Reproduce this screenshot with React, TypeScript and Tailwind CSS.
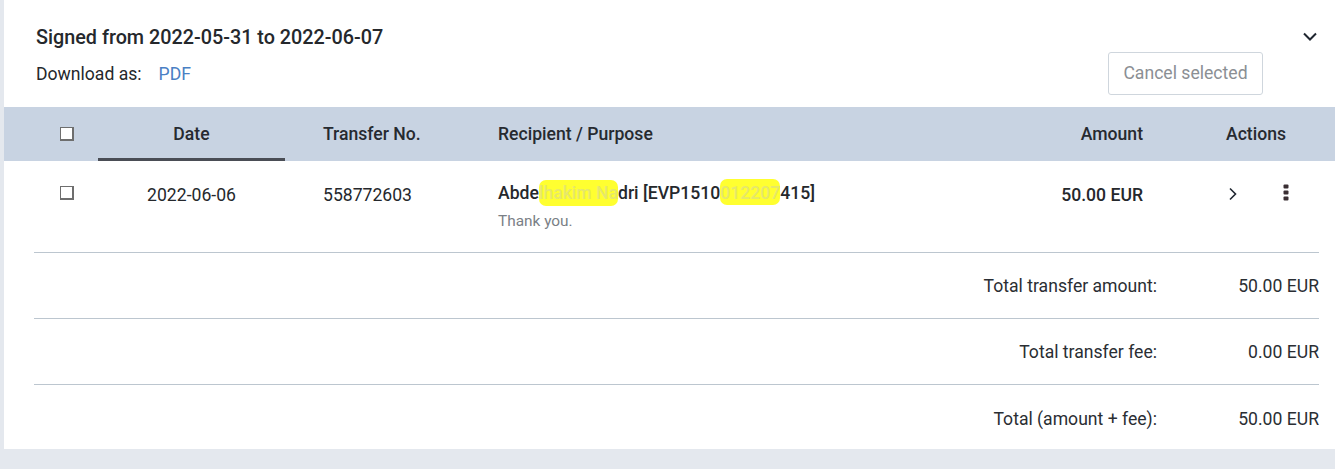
import React from "react";

const font = { fontFamily: "Roboto, 'Noto Sans', sans-serif" };

function Box() {
  return <span className="block w-[14px] h-[14px] bg-white border-[1.5px] border-[#6e6e6e] border-b-2 border-r-2" />;
}

function TotalRow({ label, value, last }: { label: string; value: string; last?: boolean }) {
  return (
    <div className={`flex items-center justify-end h-[66px] shrink-0 pt-[2px] ${last ? "" : "border-b border-[#bcc6cf]"}`}>
      <span className="text-[17.6px] text-[#2a2e33]">{label}</span>
      <span className="w-[162px] text-right text-[17.6px] text-[#2a2e33]">{value}</span>
    </div>
  );
}

export default function App() {
  return (
    <div className="w-[1335px] h-[469px] bg-[#e4e8ee] pl-[4px]" style={font}>
      <div className="bg-white h-[449px] flex flex-col overflow-hidden">
        <div className="flex shrink-0 h-[107px] pl-[32px] pr-[15px]">
          <div className="flex-1 pt-[24px]">
            <div className="text-[19.8px] font-medium text-[#25282c] leading-[28px]">Signed from 2022-05-31 to 2022-06-07</div>
            <div className="flex items-center mt-[11px] text-[17.6px] leading-[22px]">
              <span className="text-[#25282c]">Download as:</span>
              <span className="ml-[17px] text-[#4a80c4]">PDF</span>
            </div>
          </div>
          <div className="flex flex-col items-end">
            <div className="h-[52px] pt-[30px] pr-[1px]">
              <svg width="18" height="12" viewBox="0 0 18 12" fill="none">
                <path d="M3 3.5 L9 9.5 L15 3.5" stroke="#1f2630" strokeWidth="2" />
              </svg>
            </div>
          </div>
        </div>
        <div className="relative shrink-0 -mt-[55px] h-[55px] flex justify-end pr-[72px]">
          <button className="h-[43px] w-[155px] border border-[#cfd6dd] rounded-[3px] text-[17.6px] text-[#8b8f94] bg-white">
            Cancel selected
          </button>
        </div>

        <div className="flex shrink-0 items-stretch h-[54px] bg-[#c8d3e2] text-[17.6px] font-medium text-[#262a30] pl-[30px] pr-[16px]">
          <div className="w-[64px] flex items-center pl-[26px]"><Box /></div>
          <div className="w-[187px] flex items-center justify-center border-b-[3px] border-[#4a4d55] pt-[3px]">Date</div>
          <div className="w-[175px] flex items-center pl-[38px]">Transfer No.</div>
          <div className="flex-1 flex items-center pl-[38px]">Recipient / Purpose</div>
          <div className="w-[200px] flex items-center justify-end">Amount</div>
          <div className="w-[176px] flex items-center pl-[83px]">Actions</div>
        </div>

        <div className="ml-[30px] mr-[16px] shrink-0 border-b border-[#bcc6cf] h-[92px] flex text-[17.6px] text-[#25282c]">
          <div className="w-[64px] pl-[26px] pt-[25px]"><Box /></div>
          <div className="w-[187px] text-center pt-[21px]">2022-06-06</div>
          <div className="w-[175px] pl-[38px] pt-[21px]">558772603</div>
          <div className="flex-1 pl-[38px] pt-[21px]">
            <div className="font-medium leading-[22px] whitespace-nowrap">
              Abde
              <span className="bg-[#ffff30] text-[#e6e86a] rounded-[7px] py-[3px]">lhakim Na</span>
              dri [EVP1510
              <span className="bg-[#ffff30] text-[#e6e86a] rounded-[7px] pt-[4px] pb-[2px]">012207</span>
              415]
            </div>
            <div className="text-[15.4px] text-[#7a7f86] mt-[6px]">Thank you.</div>
          </div>
          <div className="w-[200px] text-right font-medium pt-[21px]">50.00 EUR</div>
          <div className="w-[176px] flex pt-[25px] pl-[85px]">
            <svg width="10" height="14" viewBox="0 0 10 14" fill="none" className="mt-[1px]">
              <path d="M2 1.5 L7.5 7 L2 12.5" stroke="#1f2630" strokeWidth="1.6" />
            </svg>
            <svg width="6" height="18" viewBox="0 0 6 18" className="ml-[45px] -mt-[2px]">
              <rect x="0.5" y="0.5" width="5" height="4" rx="1" fill="#3a2f33" />
              <rect x="0.5" y="6.5" width="5" height="4" rx="1" fill="#3a2f33" />
              <rect x="0.5" y="12.5" width="5" height="4" rx="1" fill="#3a2f33" />
            </svg>
          </div>
        </div>

        <div className="ml-[30px] mr-[16px] shrink-0">
          <TotalRow label="Total transfer amount:" value="50.00 EUR" />
          <TotalRow label="Total transfer fee:" value="0.00 EUR" />
          <TotalRow label="Total (amount + fee):" value="50.00 EUR" last />
        </div>
      </div>
    </div>
  );
}
